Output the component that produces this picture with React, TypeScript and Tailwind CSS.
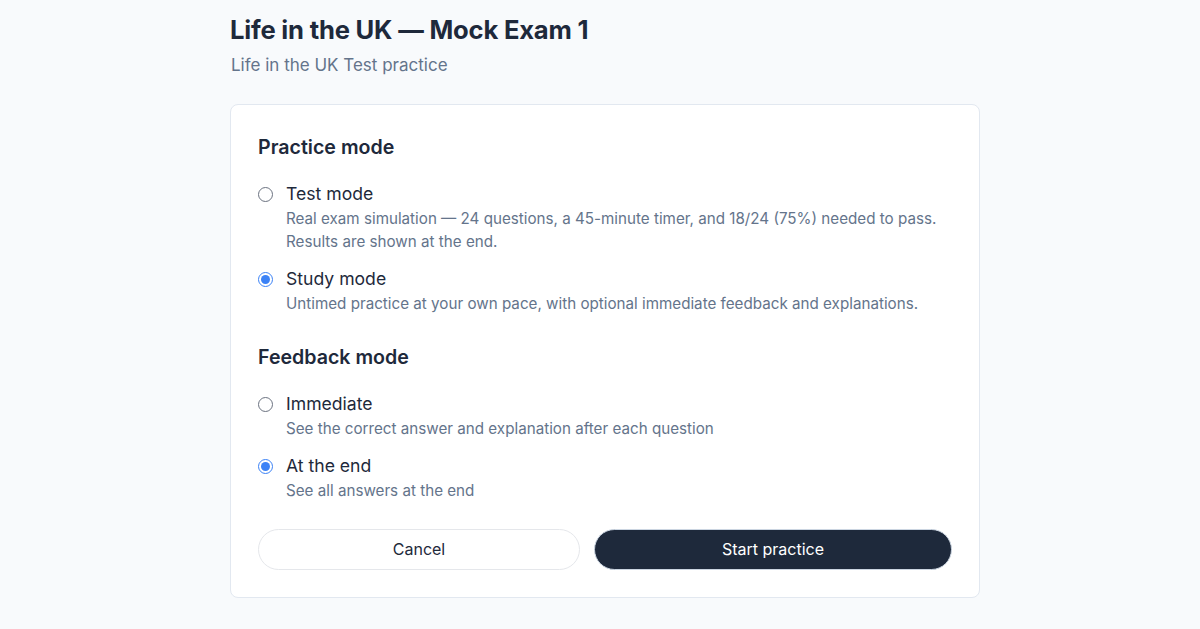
import React, { useState } from "react";

function Radio({ checked }: { checked: boolean }) {
  return checked ? (
    <span className="mt-[5px] flex h-[15px] w-[15px] shrink-0 items-center justify-center rounded-full border-[1.5px] border-[#3b82f6] bg-white">
      <span className="h-[9px] w-[9px] rounded-full bg-[#3b82f6]" />
    </span>
  ) : (
    <span className="mt-[5px] h-[15px] w-[15px] shrink-0 rounded-full border border-[#6b7280] bg-white" />
  );
}

function Option({
  label,
  desc,
  checked,
  onClick,
}: {
  label: string;
  desc: React.ReactNode;
  checked: boolean;
  onClick: () => void;
}) {
  return (
    <div className="flex cursor-pointer gap-[13px]" onClick={onClick}>
      <Radio checked={checked} />
      <div className="flex flex-col">
        <div className="text-[17.6px] leading-[24px] text-[#1e293b]">{label}</div>
        <div className="mt-[0.5px] text-[15.2px] leading-[23px] text-[#64748b]">{desc}</div>
      </div>
    </div>
  );
}

export default function App() {
  const [mode, setMode] = useState("study");
  const [fb, setFb] = useState("end");
  return (
    <div
      className="min-h-[629px] bg-[#f8fafc] pl-[230px] pt-[14px]"
      style={{ fontFamily: "Inter, 'Noto Sans', sans-serif" }}
    >
      <div className="w-[750px]">
        <h1 className="text-[25.6px] font-bold leading-[32px] tracking-[-0.2px] text-[#1e293b]">
          Life in the UK — Mock Exam 1
        </h1>
        <p className="mt-[7px] pl-px text-[17px] leading-[24px] text-[#64748b]">Life in the UK Test practice</p>

        <div className="mt-[27px] rounded-[8px] border border-[#e2e8f0] bg-white px-[27px] pb-[27px] pt-[28px]">
          <h2 className="text-[19.6px] font-semibold leading-[28px] text-[#1e293b]">Practice mode</h2>
          <div className="mt-[21px] flex flex-col gap-[14.5px]">
            <Option
              label="Test mode"
              checked={mode === "test"}
              onClick={() => setMode("test")}
              desc={
                <>
                  Real exam simulation — 24 questions, a 45-minute timer, and 18/24 (75%) needed to pass.
                  <br />
                  Results are shown at the end.
                </>
              }
            />
            <Option
              label="Study mode"
              checked={mode === "study"}
              onClick={() => setMode("study")}
              desc="Untimed practice at your own pace, with optional immediate feedback and explanations."
            />
          </div>

          <h2 className="mt-[28.5px] text-[19.6px] font-semibold leading-[28px] text-[#1e293b]">Feedback mode</h2>
          <div className="mt-[21px] flex flex-col gap-[14.5px]">
            <Option
              label="Immediate"
              checked={fb === "immediate"}
              onClick={() => setFb("immediate")}
              desc="See the correct answer and explanation after each question"
            />
            <Option
              label="At the end"
              checked={fb === "end"}
              onClick={() => setFb("end")}
              desc="See all answers at the end"
            />
          </div>

          <div className="mt-[27px] flex gap-[14px]">
            <button className="h-[41px] w-[322px] rounded-full border border-[#e5e7eb] bg-white text-[16px] text-[#1e293b]">
              Cancel
            </button>
            <button className="h-[41px] flex-1 rounded-full border border-[#cbd5e1] bg-[#1e293b] text-[16px] text-white">
              Start practice
            </button>
          </div>
        </div>
      </div>
    </div>
  );
}
